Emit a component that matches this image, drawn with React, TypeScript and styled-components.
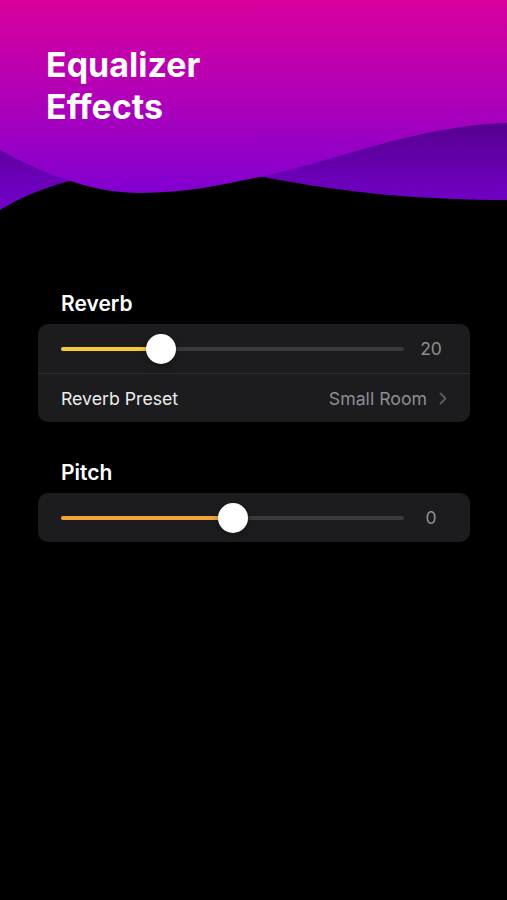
import React from "react";
import styled, { createGlobalStyle } from "styled-components";

const GlobalStyle = createGlobalStyle`
  html, body {
    margin: 0;
    padding: 0;
    background: #000;
  }
  body {
    font-family: Inter, "Noto Sans", "Liberation Sans", sans-serif;
    -webkit-font-smoothing: antialiased;
  }
`;

const Page = styled.div`
  min-height: 900px;
  background: #000;
  color: #fff;
`;

const Header = styled.header`
  position: relative;
  height: 212px;
  overflow: hidden;
`;

const Waves = styled.svg`
  position: absolute;
  inset: 0;
  width: 100%;
  height: 100%;
  display: block;
`;

const Title = styled.h1`
  position: relative;
  margin: 0;
  padding: 44px 0 0 46px;
  font-size: 34px;
  line-height: 42px;
  font-weight: 700;
  color: #fff;
`;

const Content = styled.main`
  padding: 80px 37px 0 38px;
  display: flex;
  flex-direction: column;
`;

const Section = styled.section<{ $first?: boolean }>`
  margin-top: ${(p) => (p.$first ? "0" : "39px")};
`;

const SectionLabel = styled.h2`
  margin: 0 0 8px 23px;
  font-size: 21px;
  line-height: 24px;
  font-weight: 600;
  color: #fff;
`;

const Card = styled.div`
  background: #1c1c1e;
  border-radius: 10px;
  overflow: hidden;
`;

const SliderRow = styled.div`
  height: 49px;
  display: flex;
  align-items: center;
  padding: 0 19px 0 23px;
  gap: 7px;
`;

const Track = styled.div`
  position: relative;
  flex: 1;
  height: 4px;
  border-radius: 2px;
  background: #3a3a3c;
`;

const Fill = styled.div<{ $color: string }>`
  position: absolute;
  left: 0;
  top: 0;
  bottom: 0;
  border-radius: 2px;
  background: ${(p) => p.$color};
`;

const Thumb = styled.div`
  position: absolute;
  top: 50%;
  width: 30px;
  height: 30px;
  margin: -15px 0 0 -15px;
  border-radius: 50%;
  background: #fff;
  box-shadow: 0 2px 6px rgba(0, 0, 0, 0.35);
`;

const Value = styled.span`
  width: 40px;
  text-align: center;
  font-size: 17.5px;
  color: #8e8e93;
`;

const Divider = styled.div`
  height: 1px;
  background: #2c2c2e;
`;

const LinkRow = styled.div`
  height: 48px;
  display: flex;
  align-items: center;
  padding: 0 23px;
  font-size: 17.7px;
`;

const RowTitle = styled.span`
  flex: 1;
  color: #ececec;
`;

const RowValue = styled.span`
  color: #8e8e93;
  margin-right: 12px;
`;

const Chevron = () => (
  <svg width="8" height="13" viewBox="0 0 8 13" fill="none">
    <path d="M1.5 1.5L6.5 6.5L1.5 11.5" stroke="#5c5c60" strokeWidth="1.8" strokeLinecap="round" strokeLinejoin="round" />
  </svg>
);

type SliderProps = { fraction: number; color: string; value: string };

const Slider = ({ fraction, color, value }: SliderProps) => {
  // thumb centre travels between 15px and (width - 15px)
  const pos = `calc(15px + (100% - 30px) * ${fraction})`;
  return (
    <SliderRow>
      <Track>
        <Fill $color={color} style={{ width: pos }} />
        <Thumb style={{ left: pos }} />
      </Track>
      <Value>{value}</Value>
    </SliderRow>
  );
};

const App = () => {
  return (
    <Page>
      <GlobalStyle />
      <Header>
        <Waves viewBox="0 0 507 212" preserveAspectRatio="none">
          <defs>
            <linearGradient id="main" x1="0" y1="0" x2="0" y2="195" gradientUnits="userSpaceOnUse">
              <stop offset="0" stopColor="#d8009c" />
              <stop offset="0.5" stopColor="#b000b8" />
              <stop offset="1" stopColor="#8000d2" />
            </linearGradient>
            <linearGradient id="back" x1="0" y1="120" x2="0" y2="205" gradientUnits="userSpaceOnUse">
              <stop offset="0" stopColor="#55008a" />
              <stop offset="0.4" stopColor="#6200a6" />
              <stop offset="1" stopColor="#7200c8" />
            </linearGradient>
          </defs>
          <path d="M0 0H507V200C430 200 350 194 263 177C200 165 80 160 0 210Z" fill="url(#back)" />
          <path
            d="M0 0H507V123C420 125 330 162 265 176C230 183 190 193 140 193C90 193 40 172 0 150Z"
            fill="url(#main)"
          />
        </Waves>
        <Title>
          Equalizer
          <br />
          Effects
        </Title>
      </Header>
      <Content>
        <Section $first>
          <SectionLabel>Reverb</SectionLabel>
          <Card>
            <Slider fraction={0.272} color="#f4ca3a" value="20" />
            <Divider />
            <LinkRow>
              <RowTitle>Reverb Preset</RowTitle>
              <RowValue>Small Room</RowValue>
              <Chevron />
            </LinkRow>
          </Card>
        </Section>
        <Section>
          <SectionLabel>Pitch</SectionLabel>
          <Card>
            <Slider fraction={0.5} color="#f0a43a" value="0" />
          </Card>
        </Section>
      </Content>
    </Page>
  );
};

export default App;
